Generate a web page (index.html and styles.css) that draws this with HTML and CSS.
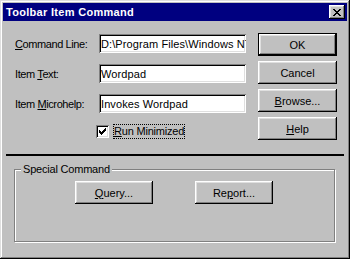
FILE: index.html
```html
<!DOCTYPE html>
<html lang="en">
<head>
	<meta charset="utf-8">
	<title>Toolbar Item Command</title>
	<link rel="stylesheet" href="styles.css">
</head>
<body>

	<div class="window">
		<div class="titlebar">
			<span class="title">Toolbar Item Command</span>
			<button class="close">
				<svg width="8" height="7" viewBox="0 0 8 7" shape-rendering="crispEdges">
					<path d="M0 0h2v1h-2zM6 0h2v1h-2zM1 1h2v1h-2zM5 1h2v1h-2zM2 2h4v1h-4zM3 3h2v1h-2zM2 4h4v1h-4zM1 5h2v1h-2zM5 5h2v1h-2zM0 6h2v1h-2zM6 6h2v1h-2z" fill="#000"/>
				</svg>
			</button>
		</div>

		<div class="top">
			<div class="form">
				<div class="row">
					<label class="label"><u>C</u>ommand Line:</label>
					<input class="edit" type="text" value="D:\Program Files\Windows NT\Accessories\wordpad.exe">
				</div>
				<div class="row">
					<label class="label">Item <u>T</u>ext:</label>
					<input class="edit" type="text" value="Wordpad">
				</div>
				<div class="row">
					<label class="label">Item <u>M</u>icrohelp:</label>
					<input class="edit" type="text" value="Invokes Wordpad">
				</div>
				<div class="check-row">
					<span class="checkbox">
						<svg width="7" height="7" viewBox="0 0 7 7" shape-rendering="crispEdges">
							<path d="M6 0h1v1h-1zM5 1h2v1h-2zM0 2h1v1h-1zM4 2h3v1h-3zM0 3h2v1h-2zM3 3h3v1h-3zM0 4h5v1h-5zM1 5h3v1h-3zM2 6h1v1h-1z" fill="#000"/>
						</svg>
					</span>
					<span class="check-label"><u>R</u>un Minimized</span>
				</div>
			</div>

			<div class="actions">
				<button class="btn default">OK</button>
				<button class="btn">Cancel</button>
				<button class="btn"><u>B</u>rowse...</button>
				<button class="btn"><u>H</u>elp</button>
			</div>
		</div>

		<div class="separator"></div>

		<fieldset class="group">
			<legend>Special Command</legend>
			<div class="group-buttons">
				<button class="btn small"><u>Q</u>uery...</button>
				<button class="btn small">Re<u>p</u>ort...</button>
			</div>
		</fieldset>
	</div>

</body>
</html>
```

FILE: styles.css
```css
body {
	margin: 0;
	padding: 0;
	font-family: "Liberation Sans", Arial, sans-serif;
	font-size: 11px;
	color: #000;
}

.window {
	width: 350px;
	height: 259px;
	box-sizing: border-box;
	padding: 3px;
	background: #c0c0c0;
	box-shadow: inset -1px -1px #000, inset 1px 1px #dfdfdf, inset -2px -2px #808080, inset 2px 2px #fff;
}

/* title bar */
.titlebar {
	height: 18px;
	background: #000080;
	display: flex;
	align-items: center;
	padding-left: 3px;
}
.title {
	flex: 1;
	color: #fff;
	font-weight: bold;
	font-size: 11px;
	letter-spacing: 0.3px;
}
.close {
	width: 16px;
	height: 14px;
	margin-right: 2px;
	padding: 0;
	border: 0;
	background: #c0c0c0;
	display: flex;
	align-items: center;
	justify-content: center;
	box-shadow: inset -1px -1px #000, inset 1px 1px #fff, inset -2px -2px #808080, inset 2px 2px #dfdfdf;
}
.close svg {
	display: block;
	margin-left: -1px;
}

/* fields + buttons */
.top {
	display: flex;
	padding: 12px 0 0 12px;
}
.form {
	width: 231px;
	display: flex;
	flex-direction: column;
	gap: 11px;
	padding-top: 1px;
}
.row {
	display: flex;
	align-items: center;
	height: 19px;
}
.label {
	width: 84px;
	letter-spacing: -0.4px;
}
.edit {
	width: 147px;
	height: 19px;
	box-sizing: border-box;
	margin: 0;
	padding: 0 0 0 2px;
	border: 0;
	background: #fff;
	font: inherit;
	color: #000;
	letter-spacing: 0.1px;
	outline: none;
	box-shadow: inset 1px 1px #808080, inset -1px -1px #fff, inset 2px 2px #000, inset -2px -2px #dfdfdf;
}

.check-row {
	display: flex;
	align-items: center;
	height: 15px;
	padding-left: 81px;
}
.checkbox {
	width: 13px;
	height: 13px;
	box-sizing: border-box;
	background: #fff;
	display: flex;
	align-items: center;
	justify-content: center;
	box-shadow: inset 1px 1px #808080, inset -1px -1px #fff, inset 2px 2px #000, inset -2px -2px #dfdfdf;
}
.check-label {
	margin-left: 4px;
	height: 15px;
	line-height: 15px;
	padding: 0 1px;
	box-sizing: border-box;
	white-space: nowrap;
	outline: 1px dotted #000;
	outline-offset: -1px;
	letter-spacing: -0.2px;
}

.actions {
	margin-left: 12px;
	width: 79px;
	display: flex;
	flex-direction: column;
	gap: 5px;
}

.btn {
	height: 23px;
	padding: 0;
	border: 0;
	background: #c0c0c0;
	font: inherit;
	color: #000;
	box-shadow: inset -1px -1px #000, inset 1px 1px #fff, inset -2px -2px #808080, inset 2px 2px #dfdfdf;
}
.btn.default {
	border: 1px solid #000;
}
.btn.small {
	width: 78px;
}

.separator {
	height: 2px;
	margin: 14px 3px 0 3px;
	background: #000;
}

/* special command group */
.group {
	width: 321px;
	box-sizing: border-box;
	margin: 7px 0 0 11px;
	padding: 5px 6px 37px 6px;
	border: 1px solid #808080;
	box-shadow: 1px 1px 0 #fff, inset 1px 1px 0 #fff;
}
.group legend {
	padding: 0 2px;
	line-height: 13px;
	background: #c0c0c0;
	letter-spacing: -0.2px;
}
.group-buttons {
	display: flex;
	gap: 42px;
	padding-left: 54px;
}
```
